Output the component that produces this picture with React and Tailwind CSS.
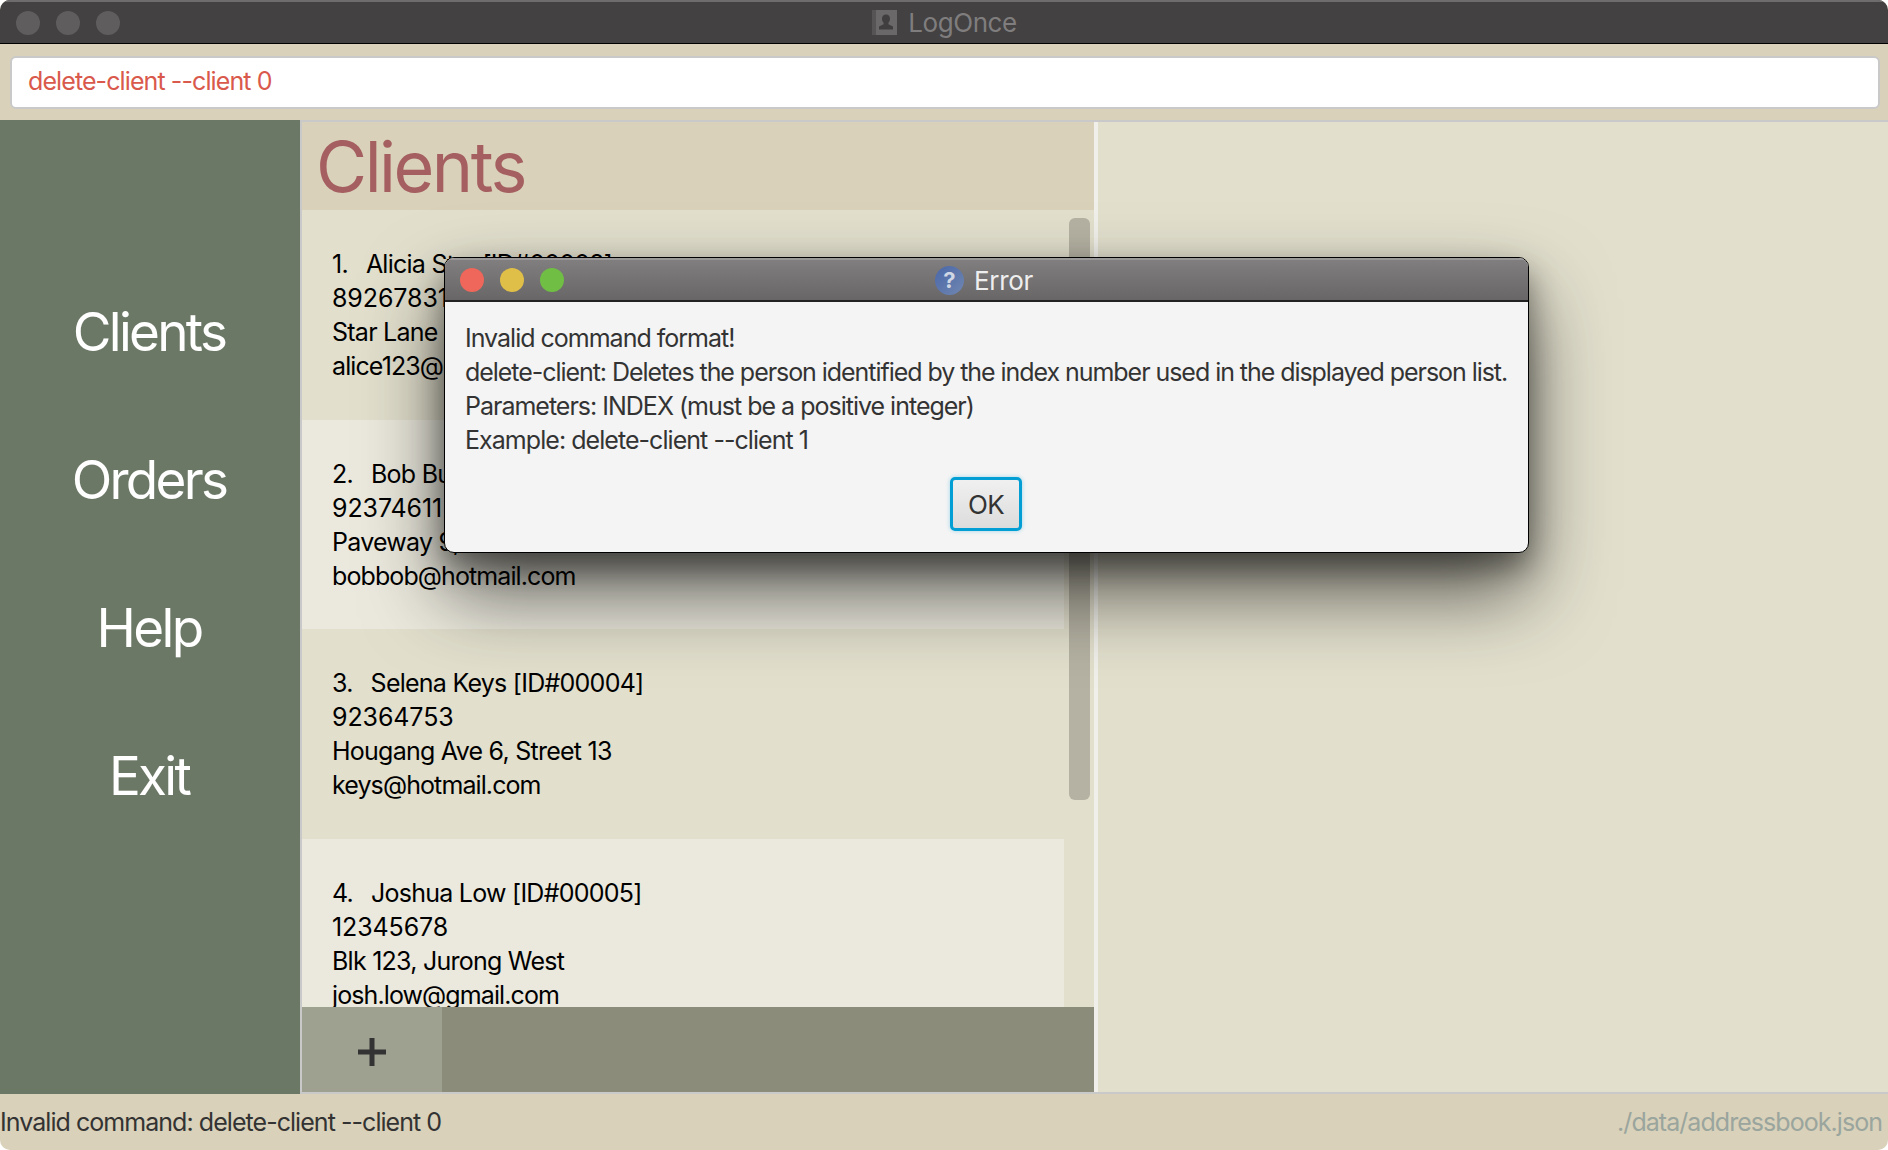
import React from 'react';

const clients = [
  { name: 'Alicia Star', id: '00002', phone: '89267831', address: 'Star Lane 12', email: 'alice123@gmail.com', bg: 'bg-[#e2dfcd]' },
  { name: 'Bob Burger', id: '00003', phone: '92374611', address: 'Paveway 9, Street 2', email: 'bobbob@hotmail.com', bg: 'bg-[#ebe9dd]' },
  { name: 'Selena Keys', id: '00004', phone: '92364753', address: 'Hougang Ave 6, Street 13', email: 'keys@hotmail.com', bg: 'bg-[#e2dfcd]' },
  { name: 'Joshua Low', id: '00005', phone: '12345678', address: 'Blk 123, Jurong West', email: 'josh.low@gmail.com', bg: 'bg-[#ebe9dd]' },
];

const navItems = ['Clients', 'Orders', 'Help', 'Exit'];

// Card in the client list
const ClientCard = ({ index, client }) => (
  <div className={`h-[209.6px] shrink-0 pl-[30px] pt-[37px] text-[25px] leading-[34px] tracking-[-0.75px] text-black ${client.bg}`}>
    <div className="flex gap-[18px]">
      <span>{index}.</span>
      <span>{client.name} [ID#{client.id}]</span>
    </div>
    <div className="tracking-[-0.1px]">{client.phone}</div>
    <div>{client.address}</div>
    <div className="tracking-[-0.9px]">{client.email}</div>
  </div>
);

const ErrorDialog = () => (
  <div className="absolute left-[444px] top-[257px] flex h-[296px] w-[1085px] flex-col overflow-hidden rounded-[10px] border border-black bg-[#f4f4f4] shadow-[0_14px_30px_rgba(0,0,0,0.4),0_40px_80px_rgba(0,0,0,0.6)]">
    <div className="relative flex h-[44px] shrink-0 items-center justify-center border-b-2 border-[#222] border-t-2 border-t-[#9a9898] bg-gradient-to-b from-[#807e7e] to-[#686666]">
      <div className="absolute left-[15px] flex gap-[16px]">
        <span className="h-[24px] w-[24px] rounded-full bg-[#ef675b]" />
        <span className="h-[24px] w-[24px] rounded-full bg-[#e0bf48]" />
        <span className="h-[24px] w-[24px] rounded-full bg-[#70bf44]" />
      </div>
      <div className="ml-[-5px] flex items-center gap-[10px]">
        <span className="flex h-[29px] w-[29px] items-center justify-center rounded-full bg-gradient-to-br from-[#4a67a8] to-[#7187b0] text-[22px] font-bold text-[#cfd6e4]">?</span>
        <span className="text-[26px] tracking-[-0.3px] text-[#eeeeee]">Error</span>
      </div>
    </div>
    <div className="pl-[20px] pt-[19px] text-[25px] leading-[34px] tracking-[-1px] text-[#333333]">
      <div>Invalid command format!</div>
      <div className="tracking-[-1.05px]">delete-client: Deletes the person identified by the index number used in the displayed person list.</div>
      <div>Parameters: INDEX (must be a positive integer)</div>
      <div className="tracking-[-0.95px]">Example: delete-client --client 1</div>
    </div>
    <div className="flex justify-center pt-[20px]">
      <button className="ml-[-1px] h-[54px] w-[72px] rounded-[5px] border-[3px] border-[#039ed3] bg-gradient-to-b from-[#f0f0f0] to-[#dcdcdc] text-[26px] tracking-[-0.6px] text-[#333333] shadow-[0_0_4px_rgba(3,158,211,0.35)]">
        OK
      </button>
    </div>
  </div>
);

export default function App() {
  return (
    <div className="relative flex h-[1150px] w-[1888px] flex-col overflow-hidden rounded-[10px] bg-[#d9d1b9] font-['Inter',sans-serif]">
      {/* title bar */}
      <div className="relative flex h-[44px] shrink-0 items-center justify-center border-b border-black border-t-2 border-t-[#6e6c6c] bg-[#434142]">
        <div className="absolute left-[16px] flex gap-[16px]">
          <span className="h-[24px] w-[24px] rounded-full bg-[#5f5d5d]" />
          <span className="h-[24px] w-[24px] rounded-full bg-[#5f5d5d]" />
          <span className="h-[24px] w-[24px] rounded-full bg-[#5f5d5d]" />
        </div>
        <div className="ml-[1px] flex items-center gap-[11px]">
          <svg width="25" height="25" viewBox="0 0 25 25">
            <rect x="0" y="0" width="25" height="25" fill="#6a6868" />
            <rect x="0" y="0" width="4" height="25" fill="#565454" />
            <path d="M14 4.5c-2.6 0-4 1.9-4 4.2 0 1.7.7 3.1 1.6 4v1.6l-4.6 2.2v3h14v-3l-4.6-2.2v-1.6c.9-.9 1.6-2.3 1.6-4 0-2.3-1.4-4.2-4-4.2z" fill="#403e3e" />
          </svg>
          <span className="text-[26px] tracking-[-0.4px] text-[#7f7d7d]">LogOnce</span>
        </div>
      </div>

      {/* command box */}
      <div className="flex h-[76px] shrink-0 items-center pl-[10px] pr-[8px]">
        <div className="flex h-[53px] w-full items-center rounded-[6px] border-2 border-[#c9c9c9] bg-white pl-[16px] text-[25px] tracking-[-0.9px] text-[#d9594c]">
          delete-client --client 0
        </div>
      </div>

      <div className="flex min-h-0 flex-1">
        {/* sidebar */}
        <div className="flex w-[300px] shrink-0 flex-col items-center bg-[#6c7866] pr-[2px] pt-[138px]">
          {navItems.map((item) => (
            <div key={item} className="flex h-[148px] shrink-0 items-start justify-center text-[53px] leading-[148px] tracking-[-2.7px] text-white">
              {item}
            </div>
          ))}
        </div>

        {/* main area */}
        <div className="flex min-w-0 flex-1 border-l-[2px] border-t-[2px] border-b-[2px] border-[#c9c9c9]">
          <div className="flex w-[792px] shrink-0 flex-col">
            <div className="flex h-[88px] shrink-0 items-center bg-[#d9d1b9] pl-[14px] text-[70px] tracking-[-2.5px] text-[#a55f60]">
              Clients
            </div>
            <div className="flex min-h-0 flex-1 bg-[#e2dfcd]">
              <div className="flex min-w-0 flex-1 flex-col overflow-hidden">
                {clients.map((client, i) => (
                  <ClientCard key={client.id} index={i + 1} client={client} />
                ))}
              </div>
              <div className="w-[30px] shrink-0 pl-[5px] pr-[4px] pt-[8px]">
                <div className="h-[582px] rounded-[6px] bg-[#b5b2a3]" />
              </div>
            </div>
            <div className="flex h-[85px] shrink-0 bg-[#8b8d7a]">
              <div className="flex w-[140px] items-center justify-center bg-[#9fa190] pt-[4px]">
                <svg width="28" height="28" viewBox="0 0 28 28">
                  <path d="M14 0v28M0 14h28" stroke="#333333" strokeWidth="5" fill="none" />
                </svg>
              </div>
            </div>
          </div>
          <div className="w-[4px] shrink-0 bg-[#f0efe9]" />
          <div className="min-w-0 flex-1 bg-[#e2dfcd]" />
        </div>
      </div>

      {/* status bar */}
      <div className="flex h-[56px] shrink-0 items-center justify-between pr-[6px] pt-[2px] text-[25px] tracking-[-0.95px]">
        <span className="text-[#333333]">Invalid command: delete-client --client 0</span>
        <span className="text-[#9aa59e]">./data/addressbook.json</span>
      </div>

      <ErrorDialog />
    </div>
  );
}
